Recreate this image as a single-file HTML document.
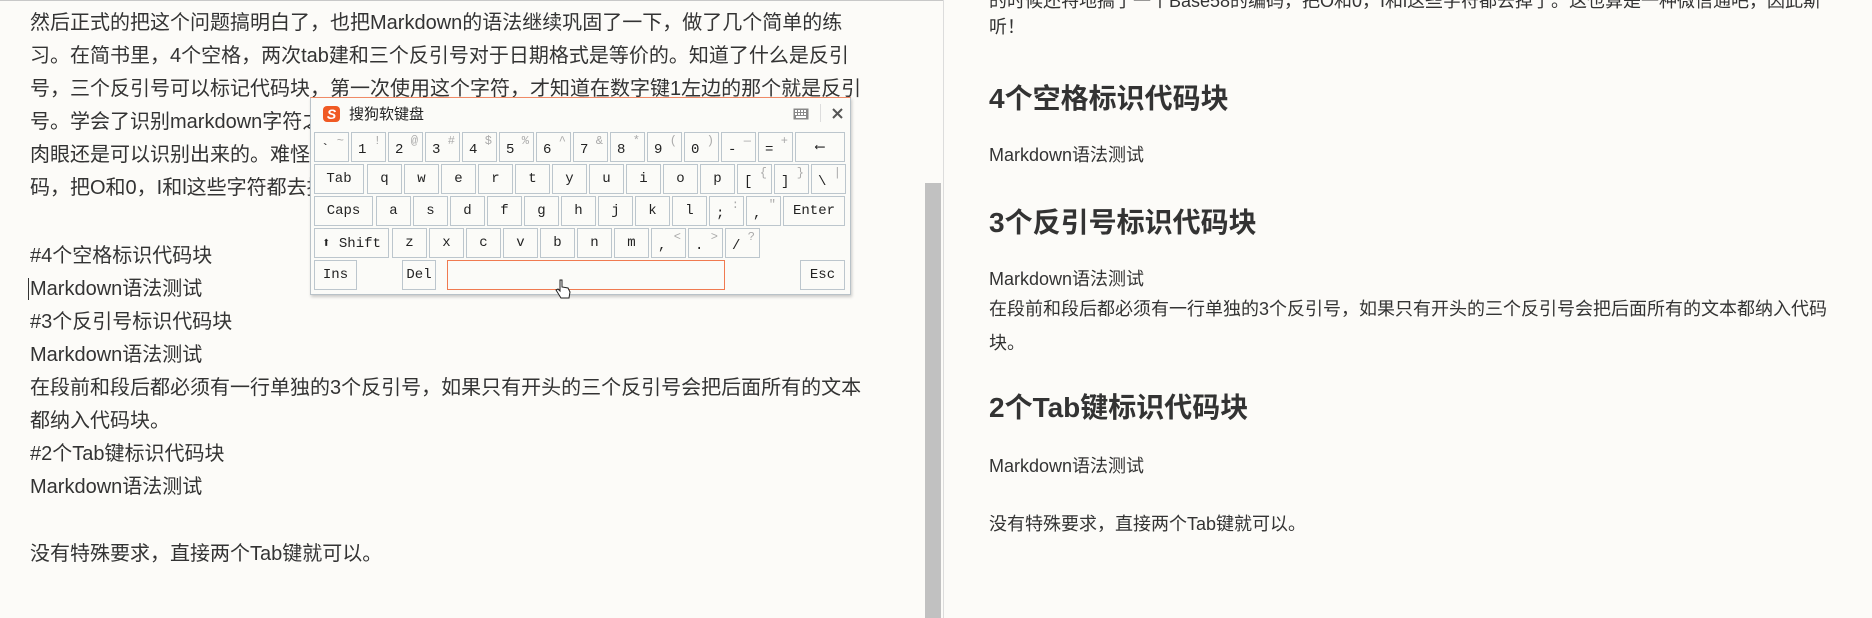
<!DOCTYPE html>
<html><head><meta charset="utf-8"><style>
*{margin:0;padding:0;box-sizing:border-box}
body{width:1872px;height:618px;overflow:hidden;background:#fcfbf8;position:relative;font-family:"Liberation Sans","Noto Sans CJK SC",sans-serif;color:#333}
.l{position:absolute;left:30px;font-size:20px;line-height:33px;white-space:nowrap;color:#333}
.r{position:absolute;left:989px;font-size:18px;line-height:30px;white-space:nowrap;color:#333}
.h{position:absolute;left:989px;font-size:28px;font-weight:bold;line-height:36px;white-space:nowrap;color:#333}
#sb{position:absolute;left:925px;top:183px;width:16px;height:435px;background:#c1c1c1}
#div{position:absolute;left:943px;top:0;width:1px;height:618px;background:#dcdcdc}
#kb{position:absolute;left:310px;top:97px;width:541px;height:198px;background:#fbfbf8;border:1px solid #b9c2c8;border-top:1px solid #f08a66;box-shadow:1px 2px 3px rgba(0,0,0,.2)}
.k{position:absolute;height:30px;border:1px solid #bcc6cd;background:#fbfbf8;font-family:"Liberation Mono",monospace;font-size:14px;color:#222}
.k .m{position:absolute;left:6px;bottom:3px}
.k .s{position:absolute;right:4px;top:1px;color:#aaa;font-size:12px}
.k .c{position:absolute;left:0;right:0;top:6px;text-align:center}
</style></head><body>
<div style="position:absolute;left:0;top:0;width:943px;height:1px;background:#c8c8c8"></div>
<div class="l" style="top:-26px">(在写博客中使用Markdown的时候遇到了这个问题，于是查了下资料，学习了一下，</div>
<div class="l" style="top:7px">然后正式的把这个问题搞明白了，也把Markdown的语法继续巩固了一下，做了几个简单的练</div>
<div class="l" style="top:40px">习。在简书里，4个空格，两次tab建和三个反引号对于日期格式是等价的。知道了什么是反引</div>
<div class="l" style="top:73px">号，三个反引号可以标记代码块，第一次使用这个字符，才知道在数字键1左边的那个就是反引</div>
<div class="l" style="top:106px">号。学会了识别markdown字符之后，发现其实也没那么难，虽然很多符号很像，</div>
<div class="l" style="top:139px">肉眼还是可以识别出来的。难怪之前有人专门设计了一种Base58的编</div>
<div class="l" style="top:172px">码，把O和0，I和l这些字符都去掉了。</div>
<div class="l" style="top:240px">#4个空格标识代码块</div>
<div class="l" style="top:273px"><span style="border-left:1px solid #333;margin-left:-2px;padding-left:1px">Markdown语法测试</span></div>
<div class="l" style="top:306px">#3个反引号标识代码块</div>
<div class="l" style="top:339px">Markdown语法测试</div>
<div class="l" style="top:372px">在段前和段后都必须有一行单独的3个反引号，如果只有开头的三个反引号会把后面所有的文本</div>
<div class="l" style="top:405px">都纳入代码块。</div>
<div class="l" style="top:438px">#2个Tab键标识代码块</div>
<div class="l" style="top:471px">Markdown语法测试</div>
<div class="l" style="top:538px">没有特殊要求，直接两个Tab键就可以。</div>
<div id="sb"></div><div id="div"></div>
<div class="r" style="top:-14px">的时候还特地搞了一个Base58的编码，把O和0，I和l这些字符都去掉了。这也算是一种微信通吧，因此斯</div>
<div class="r" style="top:12px">听！</div>
<div class="h" style="top:81px">4个空格标识代码块</div>
<div class="r" style="top:140px">Markdown语法测试</div>
<div class="h" style="top:205px">3个反引号标识代码块</div>
<div class="r" style="top:264px">Markdown语法测试</div>
<div class="r" style="top:294px">在段前和段后都必须有一行单独的3个反引号，如果只有开头的三个反引号会把后面所有的文本都纳入代码</div>
<div class="r" style="top:328px">块。</div>
<div class="h" style="top:390px">2个Tab键标识代码块</div>
<div class="r" style="top:451px">Markdown语法测试</div>
<div class="r" style="top:509px">没有特殊要求，直接两个Tab键就可以。</div>

<div id="kb">
<div style="position:absolute;left:12px;top:8px;width:17px;height:16px;background:#f05a24;border-radius:4px;color:#fff;font-weight:bold;font-size:14px;line-height:16px;text-align:center;font-style:italic">S</div>
<div style="position:absolute;left:38px;top:5px;font-size:15px;color:#222">搜狗软键盘</div>
<svg style="position:absolute;left:482px;top:10px" width="16" height="12"><rect x="0.5" y="0.5" width="15" height="11" fill="#888"/><g fill="#fff"><rect x="2" y="2" width="2" height="2"/><rect x="5" y="2" width="2" height="2"/><rect x="8" y="2" width="2" height="2"/><rect x="11" y="2" width="2" height="2"/><rect x="2" y="5" width="2" height="2"/><rect x="5" y="5" width="2" height="2"/><rect x="8" y="5" width="2" height="2"/><rect x="11" y="5" width="2" height="2"/><rect x="3" y="8" width="10" height="2"/></g></svg>
<div style="position:absolute;left:509px;top:6px;width:1px;height:18px;background:#ddd"></div>
<svg style="position:absolute;left:521px;top:10px" width="11" height="11"><path d="M1 1L10 10M10 1L1 10" stroke="#555" stroke-width="2"/></svg>
</div>
<svg style="position:absolute;left:555px;top:279px" width="16" height="22"><path d="M5 1v11l-2-2-2 1 5 8h8l1-6-2-4-6-1V1z" fill="#fff" stroke="#222"/></svg>
<script>
var kb=document.getElementById('kb');
function key(x,y,w,m,s,center){var d=document.createElement('div');d.className='k';d.style.left=(x-311)+'px';d.style.top=(y-98)+'px';d.style.width=w+'px';
if(center){d.innerHTML='<span class="c">'+m+'</span>';}else{d.innerHTML='<span class="m">'+m+'</span>'+(s?'<span class="s">'+s+'</span>':'');}
kb.appendChild(d);return d;}
var r1=[['`','~'],['1','!'],['2','@'],['3','#'],['4','$'],['5','%'],['6','^'],['7','&amp;'],['8','*'],['9','('],['0',')'],['-','—'],['=','+']];
r1.forEach(function(k,i){key(314+i*37,132,35,k[0],k[1]);});
key(795,132,50,'⟵','',true);
key(314,164,50,'Tab','',true);
var r2=[['q'],['w'],['e'],['r'],['t'],['y'],['u'],['i'],['o'],['p'],['[','{'],[']','}'],['\\','|']];
r2.forEach(function(k,i){if(k[1])key(367+i*37,164,35,k[0],k[1]);else key(367+i*37,164,35,k[0],'',true);});
key(314,196,59,'Caps','',true);
var r3=[['a'],['s'],['d'],['f'],['g'],['h'],['j'],['k'],['l'],[';',':'],[',','"']];
r3.forEach(function(k,i){if(k[1])key(376+i*37,196,35,k[0],k[1]);else key(376+i*37,196,35,k[0],'',true);});
key(783,196,62,'Enter','',true);
key(314,228,75,'⬆ Shift','',true);
var r4=[['z'],['x'],['c'],['v'],['b'],['n'],['m'],[',','&lt;'],['.','&gt;'],['/','?']];
r4.forEach(function(k,i){if(k[1])key(392+i*37,228,35,k[0],k[1]);else key(392+i*37,228,35,k[0],'',true);});
key(314,260,43,'Ins','',true);
key(402,260,34,'Del','',true);
var sp=key(447,260,278,'','',true);sp.style.borderColor='#f07a50';
key(800,260,45,'Esc','',true);
</script>
</body></html>
